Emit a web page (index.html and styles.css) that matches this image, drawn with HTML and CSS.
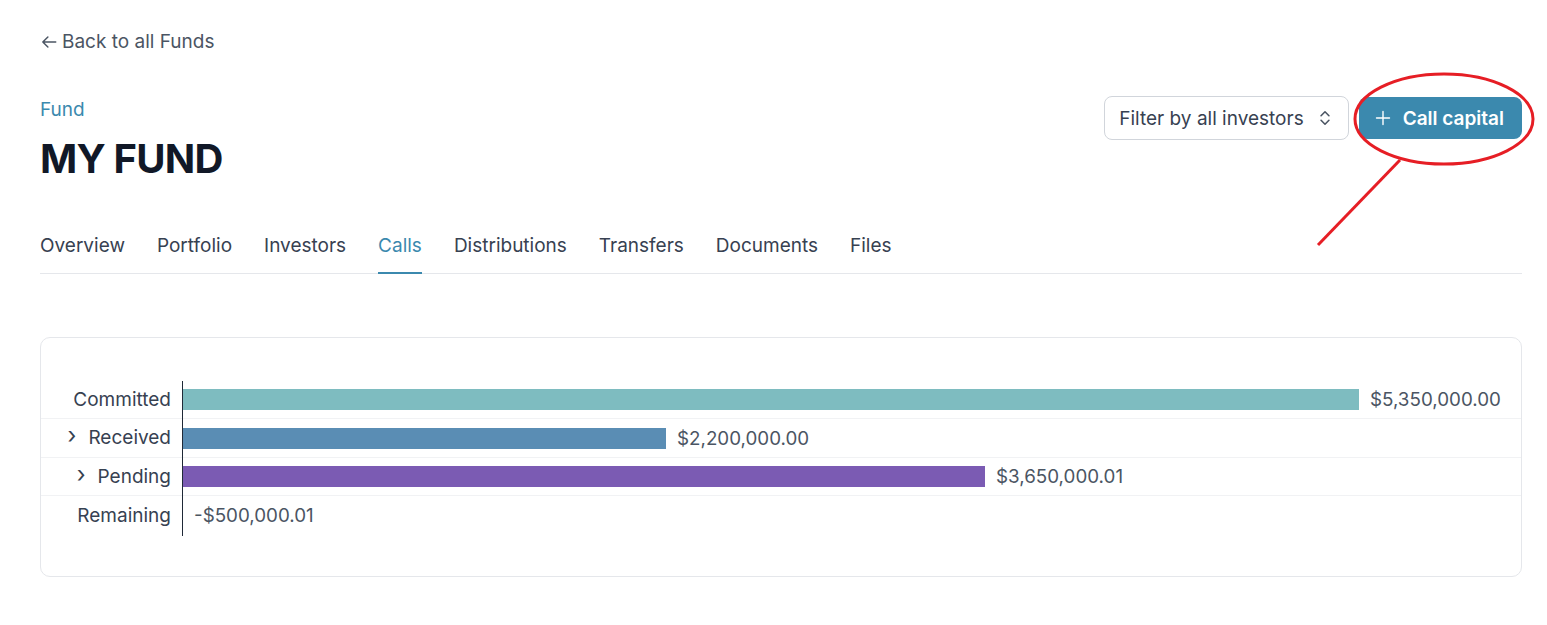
FILE: index.html
```html
<!DOCTYPE html>
<html>
<head>
<meta charset="utf-8">
<link rel="stylesheet" href="styles.css">
</head>
<body>
<div class="page">
  <a class="back" href="#">
    <svg class="back-icon" viewBox="0 0 16 16" width="18" height="18"><path d="M14 8H2.5M7 3.5 2.5 8 7 12.5" fill="none" stroke="currentColor" stroke-width="1.3" stroke-linecap="round" stroke-linejoin="round"/></svg>
    Back to all Funds
  </a>
  <div class="header">
    <div class="titles">
      <div class="eyebrow">Fund</div>
      <h1 class="title">MY FUND</h1>
    </div>
    <div class="actions">
      <button class="filter">Filter by all investors
        <svg viewBox="0 0 16 16" width="18" height="18"><path d="M4.5 6 8 2.5 11.5 6M4.5 10 8 13.5 11.5 10" fill="none" stroke="currentColor" stroke-width="1.4" stroke-linecap="round" stroke-linejoin="round"/></svg>
      </button>
      <button class="primary">
        <svg viewBox="0 0 16 16" width="16" height="16"><path d="M8 1.5v13M1.5 8h13" fill="none" stroke="currentColor" stroke-width="1.4" stroke-linecap="round"/></svg>
        Call capital
      </button>
    </div>
  </div>
  <nav class="tabs">
    <a class="tab">Overview</a>
    <a class="tab">Portfolio</a>
    <a class="tab">Investors</a>
    <a class="tab active">Calls</a>
    <a class="tab">Distributions</a>
    <a class="tab">Transfers</a>
    <a class="tab">Documents</a>
    <a class="tab">Files</a>
  </nav>
  <div class="card">
    <div class="chart">
      <div class="row">
        <div class="label">Committed</div>
        <div class="plot"><div class="bar committed" style="width:1176px"></div><span class="value">$5,350,000.00</span></div>
      </div>
      <div class="row">
        <div class="label"><span class="chev">›</span>Received</div>
        <div class="plot"><div class="bar received" style="width:483px"></div><span class="value">$2,200,000.00</span></div>
      </div>
      <div class="row">
        <div class="label"><span class="chev">›</span>Pending</div>
        <div class="plot"><div class="bar pending" style="width:802px"></div><span class="value">$3,650,000.01</span></div>
      </div>
      <div class="row">
        <div class="label">Remaining</div>
        <div class="plot"><span class="value">-$500,000.01</span></div>
      </div>
    </div>
  </div>
</div>
<svg class="annotation" width="1547" height="625" viewBox="0 0 1547 625">
  <ellipse cx="1444" cy="119" rx="89" ry="45" fill="none" stroke="#e61e25" stroke-width="3"/>
  <path d="M1400 160 L1318 245" stroke="#e61e25" stroke-width="3" fill="none"/>
</svg>
</body>
</html>
```
FILE: styles.css
```css
* { box-sizing: border-box; }
html, body { margin: 0; padding: 0; background: #fff; }
body {
  font-family: Inter, "Noto Sans", sans-serif;
  color: #374151;
  position: relative;
}
.page {
  padding: 30px 25px 40px 40px;
}
.back {
  display: flex;
  width: max-content;
  align-items: center;
  gap: 4px;
  color: #4b5563;
  text-decoration: none;
  font-size: 19px;
  line-height: 24px;
}
.back-icon { color: #4b5563; }
.header {
  display: flex;
  justify-content: space-between;
  align-items: flex-start;
  margin-top: 44px;
}
.eyebrow {
  color: #3b89ae;
  font-size: 19px;
  line-height: 24px;
}
.title {
  margin: 13px 0 0 0;
  font-size: 40px;
  line-height: 48px;
  font-weight: 700;
  color: #111827;
  letter-spacing: -0.8px;
}
.actions {
  display: flex;
  gap: 10px;
  margin-top: -2px;
}
.filter {
  display: flex;
  align-items: center;
  gap: 12px;
  height: 44px;
  padding: 0 14px;
  border: 1px solid #d1d5db;
  border-radius: 8px;
  background: #fff;
  font-family: inherit;
  font-size: 19px;
  color: #374151;
}
.filter svg { color: #4b5563; }
.primary {
  display: flex;
  align-items: center;
  gap: 12px;
  height: 42px;
  margin-top: 1px;
  padding: 0 18px 0 16px;
  border: none;
  border-radius: 8px;
  background: #3b89ae;
  color: #fff;
  font-family: inherit;
  font-size: 19px;
  font-weight: 600;
}
.tabs {
  display: flex;
  gap: 32px;
  margin-top: 51px;
  border-bottom: 1px solid #e5e7eb;
}
.tab {
  font-size: 19px;
  line-height: 24px;
  padding-bottom: 14px;
  color: #374151;
  border-bottom: 2px solid transparent;
  margin-bottom: -1px;
}
.tab.active {
  color: #3b89ae;
  border-bottom-color: #3b89ae;
}
.card {
  margin-top: 63px;
  border: 1px solid #e5e7eb;
  border-radius: 10px;
  padding: 42.5px 0 41px 0;
}
.chart {
  display: flex;
  flex-direction: column;
}
.row {
  display: flex;
  height: 38.5px;
  border-bottom: 1px solid #f1f2f4;
}
.row:last-child { border-bottom: none; }
.label {
  width: 141px;
  flex: none;
  display: flex;
  align-items: center;
  justify-content: flex-end;
  padding-right: 11px;
  font-size: 19px;
  color: #374151;
}
.chev {
  font-size: 23px;
  margin-right: 12px;
  line-height: 1;
  position: relative;
  top: -2px;
}
.plot {
  flex: 1;
  display: flex;
  align-items: center;
  border-left: 1px solid #1f2937;
  margin-bottom: -1px;
}
.bar {
  height: 21px;
  flex: none;
}
.committed { background: #7ebcc0; }
.received { background: #5a8db4; }
.pending { background: #7b5bb3; }
.value {
  margin-left: 11px;
  font-size: 18.8px;
  color: #4b5563;
}
.annotation {
  position: absolute;
  left: 0;
  top: 0;
  pointer-events: none;
}
```
